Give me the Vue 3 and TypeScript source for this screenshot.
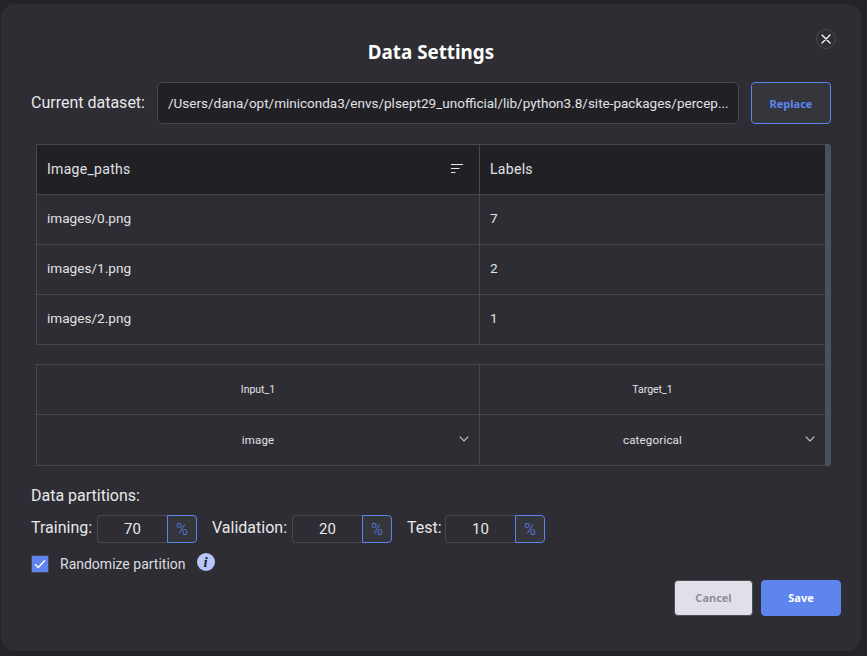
<script setup lang="ts">
const rows: [string, string][] = [
  ['images/0.png', '7'],
  ['images/1.png', '2'],
  ['images/2.png', '1'],
]
const partitions = [
  { label: 'Training:', value: 70, labelWidth: 66 },
  { label: 'Validation:', value: 20, labelWidth: 80 },
  { label: 'Test:', value: 10, labelWidth: 38 },
]
const path = '/Users/dana/opt/miniconda3/envs/plsept29_unofficial/lib/python3.8/site-packages/percep...'
</script>

<template>
  <div class="page">
    <div class="modal">
      <button class="close" aria-label="Close">
        <svg width="10" height="10" viewBox="0 0 10 10"><path d="M1 1l8 8M9 1l-8 8" stroke="#fff" stroke-width="1.3" fill="none" stroke-linecap="round" /></svg>
      </button>
      <h1 class="title">Data Settings</h1>

      <div class="dataset">
        <span class="dataset-label">Current dataset:</span>
        <div class="path"><span class="path-text">{{ path }}</span></div>
        <button class="replace">Replace</button>
      </div>

      <div class="table-wrap">
        <div class="table-body">
          <div class="grid head">
            <div class="cell">
              <span>Image_paths</span>
              <svg class="sort" width="12" height="10" viewBox="0 0 12 10"><path d="M0 .5h12M0 4.5h8.500M0 8.500h4.500" stroke="#e8e8ea" stroke-width="1" fill="none" /></svg>
            </div>
            <div class="cell">Labels</div>
          </div>
          <div v-for="r in rows" :key="r[0]" class="grid">
            <div class="cell data">{{ r[0] }}</div>
            <div class="cell data">{{ r[1] }}</div>
          </div>
          <div class="spacer"></div>
          <div class="grid top">
            <div class="cell center small">Input_1</div>
            <div class="cell center small">Target_1</div>
          </div>
          <div class="grid last">
            <div class="cell center select">
              <span>image</span>
              <svg class="chev" width="10" height="6" viewBox="0 0 10 6"><path d="M.7.7L5 5l4.300-4.300" stroke="#c9c9cd" stroke-width="1.100" fill="none" /></svg>
            </div>
            <div class="cell center select">
              <span>categorical</span>
              <svg class="chev" width="10" height="6" viewBox="0 0 10 6"><path d="M.7.7L5 5l4.300-4.300" stroke="#c9c9cd" stroke-width="1.100" fill="none" /></svg>
            </div>
          </div>
        </div>
        <div class="scrollbar"></div>
      </div>

      <div class="section-label">Data partitions:</div>
      <div class="partitions">
        <div v-for="p in partitions" :key="p.label" class="partition">
          <span class="p-label" :style="{ width: p.labelWidth + 'px' }">{{ p.label }}</span>
          <div class="p-value">{{ p.value }}</div>
          <div class="p-unit">%</div>
        </div>
      </div>

      <div class="randomize">
        <span class="checkbox">
          <svg width="12" height="10" viewBox="0 0 12 10"><path d="M1 5.200L4.300 8.500L11 1.200" stroke="#fff" stroke-width="1.400" fill="none" /></svg>
        </span>
        <span class="r-label">Randomize partition</span>
        <span class="info">i</span>
      </div>

      <div class="actions">
        <button class="btn cancel">Cancel</button>
        <button class="btn save">Save</button>
      </div>
    </div>
  </div>
</template>

<style>
html, body { margin: 0; background: #232428; }
</style>

<style scoped>
.page {
  width: 867px;
  height: 656px;
  background: #232428;
  padding: 4px 6px 5px 1px;
  box-sizing: border-box;
  font-family: Roboto, sans-serif;
  color: #e8e8ea;
}
.modal {
  position: relative;
  height: 100%;
  box-sizing: border-box;
  background: #2d2d33;
  border-radius: 14px;
  padding: 0 30px;
}
.close {
  position: absolute;
  left: 815px;
  top: 25px;
  width: 20px;
  height: 20px;
  padding: 0;
  border: 1px solid #4a4a50;
  border-radius: 50%;
  background: transparent;
  display: flex;
  align-items: center;
  justify-content: center;
}
.title {
  margin: 0;
  padding-top: 34px;
  height: 44px;
  line-height: 28px;
  box-sizing: content-box;
  text-align: center;
  font-family: "Noto Sans", sans-serif;
  font-size: 18.800px;
  font-weight: 700;
  color: #fff;
}
.dataset {
  display: flex;
  align-items: center;
  height: 42px;
}
.dataset-label {
  width: 126px;
  font-size: 16px;
  flex: none;
  margin-top: -1px;
}
.path {
  width: 582px;
  height: 42px;
  box-sizing: border-box;
  background: #212125;
  border: 1px solid #47474d;
  border-radius: 6px;
  padding: 0 10px 1px;
  display: flex;
  align-items: center;
  font-size: 13.500px;
  min-width: 0;
  color: #e2e2e5;
}
.path-text {
  white-space: nowrap;
}
.replace {
  margin-left: 12px;
  width: 80px;
  height: 42px;
  background: #35353c;
  border: 1px solid #5e84ee;
  border-radius: 4px;
  color: #5e84ee;
  font-family: "Noto Sans", sans-serif;
  font-size: 11px;
  font-weight: 700;
  padding: 0;
}
.table-wrap {
  display: flex;
  width: 795px;
  margin: 20px 0 0 5px;
  height: 322px;
}
.table-body {
  width: 789px;
  box-sizing: border-box;
}
.scrollbar {
  width: 6px;
  background: #4b515c;
  border-radius: 0 3px 3px 0;
}
.grid {
  display: grid;
  grid-template-columns: 443px 345px;
  height: 50px;
  border-left: 1px solid #47474d;
  border-bottom: 1px solid #47474d;
  box-sizing: border-box;
}
.grid.head {
  height: 51px;
  background: #212125;
  border-top: 1px solid #47474d;
}
.grid.head .cell { padding-bottom: 2px; }
.grid.top {
  height: 51px;
  border-top: 1px solid #47474d;
}
.grid.last { height: 51px; }
.cell {
  display: flex;
  align-items: center;
  justify-content: space-between;
  padding: 0 10px;
  font-size: 14px;
  letter-spacing: 0.3px;
  min-width: 0;
  color: #e2e2e5;
}
.cell.data {
  font-size: 13.600px;
  letter-spacing: 0;
  padding-bottom: 4px;
}
.cell:first-child { border-right: 1px solid #47474d; }
.sort { margin-right: 6px; }
.spacer { height: 19px; }
.center {
  position: relative;
  justify-content: center;
}
.small { font-size: 10.500px; letter-spacing: 0; }
.select { font-size: 11.500px; letter-spacing: 0.2px; }
.chev {
  position: absolute;
  right: 10px;
  top: 21px;
}
.section-label {
  margin-top: 20px;
  font-size: 16px;
  line-height: 19px;
}
.partitions {
  display: flex;
  gap: 15px;
  margin-top: 10px;
}
.partition {
  display: flex;
  align-items: center;
  height: 28px;
}
.p-label {
  font-size: 16px;
  flex: none;
  margin-top: -3px;
}
.p-value {
  width: 70px;
  height: 28px;
  box-sizing: border-box;
  border: 1px solid #47474d;
  border-right: 0;
  border-radius: 4px 0 0 4px;
  display: flex;
  align-items: center;
  justify-content: center;
  font-size: 15px;
  color: #e8e8ea;
}
.p-unit {
  width: 30px;
  height: 28px;
  box-sizing: border-box;
  border: 1px solid #5e84ee;
  border-radius: 0 4px 4px 0;
  background: #35353c;
  display: flex;
  align-items: center;
  justify-content: center;
  font-size: 16px;
  font-weight: 300;
  color: #5e84ee;
}
.randomize {
  display: flex;
  align-items: center;
  height: 18px;
  margin-top: 12px;
}
.checkbox {
  width: 18px;
  height: 18px;
  box-sizing: border-box;
  background: #5e84ee;
  border: 1px solid #47474d;
  display: flex;
  align-items: center;
  justify-content: center;
  flex: none;
}
.r-label {
  margin-left: 11px;
  font-size: 14px;
  color: #dcdce0;
}
.info {
  margin-left: 11px;
  margin-top: -4px;
  width: 18px;
  height: 18px;
  border-radius: 50%;
  background: #b6c6fa;
  color: #23232a;
  font-family: "Liberation Serif", serif;
  font-style: italic;
  font-weight: 700;
  font-size: 15px;
  line-height: 18px;
  text-align: center;
}
.actions {
  display: flex;
  justify-content: flex-end;
  gap: 8px;
  margin: 7px -10px 0 0;
}
.btn {
  height: 36px;
  padding: 0 0 2px;
  border-radius: 4px;
  font-family: "Noto Sans", sans-serif;
  font-size: 11px;
  font-weight: 700;
}
.cancel {
  width: 79px;
  background: #e1e0e8;
  border: 1px solid #4e4e55;
  color: #8e8e98;
}
.save {
  width: 80px;
  background: #5e84ee;
  border: 1px solid #5e84ee;
  color: #fff;
}
</style>
